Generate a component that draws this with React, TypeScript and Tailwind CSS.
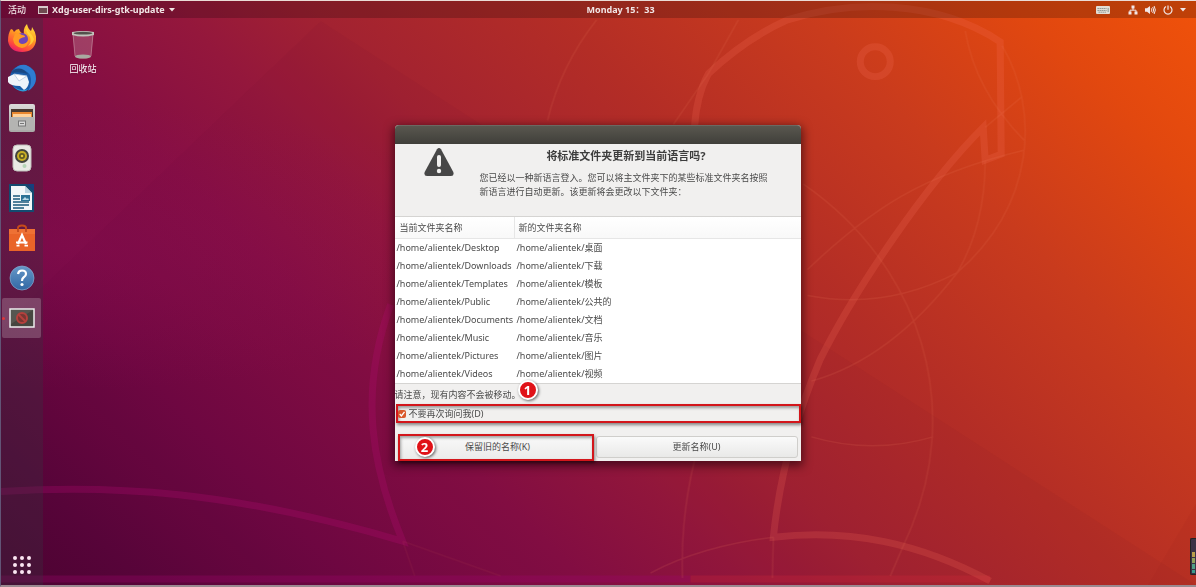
import React from "react";

const folders = [
  ["Desktop", "桌面"],
  ["Downloads", "下载"],
  ["Templates", "模板"],
  ["Public", "公共的"],
  ["Documents", "文档"],
  ["Music", "音乐"],
  ["Pictures", "图片"],
  ["Videos", "视频"],
];

function Wallpaper() {
  return (
    <svg
      className="absolute inset-0 h-full w-full"
      viewBox="0 0 1196 587"
      preserveAspectRatio="none"
      fill="none"
      aria-hidden="true"
    >
      <path d="M41 288 L320 20 L1196 587 L0 587 L0 330Z" fill="#4a0030" opacity="0.04" />
      <path d="M1196 505 L1148 587 L1196 587Z" fill="#5a0010" opacity="0.04" />
      <g stroke="#b30c74" strokeWidth="7" opacity="0.28">
        <path d="M0 493 C110 486 230 492 402 543 C372 470 357 395 390 305" />
      </g>
      <path d="M0 581 H690" stroke="#a0066c" strokeWidth="7" opacity="0.3" />
      <path d="M690 581 H990" stroke="#d8283c" strokeWidth="7" opacity="0.25" />
      <g stroke="#f8705c" strokeWidth="7" opacity="0.2">
        <path d="M694 128 Q696 95 708 73 Q745 38 787 19 C850 -1 935 -2 1000 41 L1001 154 L985 160 L983 127 C925 185 855 290 820 360 Q782 450 773 539 C850 530 920 545 990 583" />
        <circle cx="875" cy="61" r="15" />
      </g>
      <g stroke="#f08060" strokeWidth="1.5" opacity="0.15">
        <path d="M547 120 Q560 65 596 19" />
        <path d="M673 124 L708 73 L738 19" />
        <path d="M1002 45 C1040 110 1035 205 957 273 Q890 360 811 382" />
        <path d="M803 184 C920 265 967 410 905 543" />
        <path d="M807 296 Q885 311 957 273 Q985 225 985 160" />
        <path d="M807 270 C870 210 920 175 1024 150" />
        <path d="M965 30 Q975 90 1024 140" />
        <path d="M985 127 L1022 96" />
        <path d="M811 438 Q872 456 933 438" />
        <path d="M773 539 L772 580 M773 539 Q700 548 650 575 M694 462 Q680 520 682 580 M905 543 L890 578" />
        <path d="M402 543 L414 578 M402 543 L500 578" opacity="0.5" />
      </g>
    </svg>
  );
}

function Firefox() {
  return (
    <svg viewBox="0 0 28 28" className="size-7" aria-hidden="true">
      <defs>
        <linearGradient id="fx" x1="0.8" y1="0" x2="0.3" y2="1">
          <stop stopColor="#ffe23c" />
          <stop offset="0.45" stopColor="#ff9a22" />
          <stop offset="0.8" stopColor="#ff4c3c" />
          <stop offset="1" stopColor="#e91c6c" />
        </linearGradient>
      </defs>
      <path d="M3 5 Q5 5 6 8 Q8 5 11 5 Q12 9 16 10 Q15 4 19 0 Q20 5 23 7 Q24 5 24 3 Q29 10 28 17 Q26 28 14 28 Q2 28 0 17 Q0 9 3 5Z" fill="url(#fx)" />
      <circle cx="14" cy="15" r="6" fill="#7045b8" />
      <path d="M7 10 Q10 8 14 11 Q17 11 17 13 Q12 14 11 16 Q10 19 14 20 Q18 20 21 16 Q20 23 14 24 Q6 23 5 15Z" fill="#ff9a24" />
      <path d="M18 4 Q18 9 22 13 Q24 18 20 22 Q25 20 26 15 Q25 11 21 8Z" fill="#ffd83a" opacity="0.8" />
    </svg>
  );
}

function Thunderbird() {
  return (
    <svg viewBox="0 0 28 28" className="size-7" aria-hidden="true">
      <circle cx="15" cy="14" r="13" fill="#1b5ca8" />
      <path d="M6 6 Q10 0 18 1 Q28 5 28 15 Q27 23 20 27 Q25 19 22 11 Q17 4 6 6Z" fill="#2f7cd0" />
      <path d="M0 13 L6 10 L19 12 L21 18 Q20 24 16 26 L12 22 Q2 22 0 18Z" fill="#eef4fa" />
      <path d="M6 10 L11 17 L19 12Z" fill="#fff" stroke="#b5c9dd" strokeWidth="0.8" />
      <path d="M3 9 Q8 2 16 6 L20 10Q11 7 3 9Z" fill="#194883" />
      <path d="M5 22 Q12 28 20 25 L18 27 Q11 29 5 22Z" fill="#2c9bd8" />
    </svg>
  );
}

function Files() {
  return (
    <svg viewBox="0 0 28 28" className="size-7" aria-hidden="true">
      <defs>
        <linearGradient id="cab" x2="0" y2="1">
          <stop stopColor="#dadad8" />
          <stop offset="1" stopColor="#a9a9a7" />
        </linearGradient>
      </defs>
      <rect x="1" y="0" width="26" height="28" rx="2" fill="url(#cab)" />
      <rect x="3" y="5" width="22" height="8" fill="#493b32" />
      <path d="M4 8h20v5H4z" fill="#e8872f" />
      <path d="M5 10h18v3H5z" fill="#ffd29b" />
      <path d="M2 13h24v13H2z" fill="#b4b4b2" />
      <rect x="10.500" y="17" width="7" height="5" fill="#d8d8d8" stroke="#777" />
      <path d="M12 19.500h4" stroke="#777" />
    </svg>
  );
}

function Rhythmbox() {
  return (
    <svg viewBox="0 0 28 28" className="size-7" aria-hidden="true">
      <rect x="5" y="1" width="18" height="26" rx="4" fill="#e9e9e5" stroke="#bfc0bb" />
      <circle cx="14" cy="12" r="7" fill="#43453e" />
      <circle cx="14" cy="12" r="5" fill="#c6ae25" />
      <circle cx="14" cy="12" r="3" fill="#625b24" />
      <circle cx="14" cy="12" r="1.300" fill="#e5c938" />
      <circle cx="16.500" cy="22" r="2" fill="#b4d4b6" />
    </svg>
  );
}

function Writer() {
  return (
    <svg viewBox="0 0 28 28" className="size-7" aria-hidden="true">
      <path d="M1 0h18l7 7v21H1z" fill="#134b70" />
      <path d="M19 0h7v7z" fill="#15407e" />
      <path d="M3 2h14l7 7v17H3z" fill="#f2f7f9" />
      <path d="M17 2v7h7z" fill="#bad3df" />
      <path d="M5 12h7M5 15h7M5 18h16M5 21h16M5 24h11" stroke="#1a597b" strokeWidth="1.500" />
      <path d="M13 11h9v6h-9z" fill="#2b7295" />
      <path d="M14 16l3-3 2 2 1-1 1 2z" fill="#b7d9e7" />
    </svg>
  );
}

function Software() {
  return (
    <svg viewBox="0 0 28 28" className="size-7" aria-hidden="true">
      <path d="M10 6 V4 Q10 1.500 14 1.500 Q18 1.500 18 4 V6" fill="none" stroke="#c74b1a" strokeWidth="2" />
      <path d="M1 5h26v22H1z" fill="#e96428" />
      <path d="M1 5h26v5H1z" fill="#f27a3c" opacity="0.6" />
      <path d="M10 4v4M18 4v4" stroke="#b64218" strokeWidth="1.500" />
      <path d="M10 20 L14 11 L18 20" fill="none" stroke="#fff" strokeWidth="2.200" />
      <path d="M8 18.500h9M17.500 18.500h2M8.500 21.700h3M16.500 21.700h3.500" fill="none" stroke="#fff" strokeWidth="1.800" />
    </svg>
  );
}

function Help() {
  return (
    <svg viewBox="0 0 28 28" className="size-7" aria-hidden="true">
      <defs>
        <linearGradient id="hp" x2="0" y2="1">
          <stop stopColor="#6597c8" />
          <stop offset="1" stopColor="#3268a4" />
        </linearGradient>
      </defs>
      <circle cx="14" cy="14" r="12" fill="url(#hp)" stroke="#86abd0" strokeWidth="0.7" />
      <path d="M10 10 Q10.500 6.500 14 6.500 Q18 6.500 18 10 Q18 12 15.500 13.500 Q14 14.500 14 17" fill="none" stroke="#fff" strokeWidth="2.200" />
      <circle cx="14" cy="20.500" r="1.600" fill="#fff" />
    </svg>
  );
}

function BlockedScreen() {
  return (
    <svg viewBox="0 0 28 28" className="size-7" aria-hidden="true">
      <rect x="2" y="5" width="24" height="18" fill="#464640" stroke="#eee" strokeWidth="1.500" />
      <path d="M3 6h22L3 20z" fill="#66665f" opacity="0.5" />
      <circle cx="14" cy="14" r="5" fill="#783633" stroke="#b5403d" strokeWidth="2" />
      <path d="M10.500 10.500l7 7" stroke="#b5403d" strokeWidth="2" />
    </svg>
  );
}

const launchers = [
  { name: "Firefox", Icon: Firefox },
  { name: "Thunderbird", Icon: Thunderbird },
  { name: "Files", Icon: Files },
  { name: "Rhythmbox", Icon: Rhythmbox },
  { name: "LibreOffice Writer", Icon: Writer },
  { name: "Ubuntu Software", Icon: Software },
  { name: "Help", Icon: Help },
  { name: "Xdg-user-dirs-gtk-update", Icon: BlockedScreen, active: true },
];

function TopBar() {
  return (
    <header className="relative flex h-[17px] shrink-0 items-center bg-black/20 text-[9px] leading-4 font-bold text-[#f1e6e6]">
      <div className="flex w-[49%] items-center gap-3 pl-[7px]">
        <button className="font-medium">活动</button>
        <button className="flex items-center gap-1">
          <svg viewBox="0 0 10 8" className="h-2 w-[10px]" fill="none" aria-hidden="true">
            <rect x="0.5" y="0.5" width="9" height="7" fill="#6f4a50" stroke="#d8c8ca" />
            <path d="M1 1.500h8" stroke="#d8c8ca" />
          </svg>
          Xdg-user-dirs-gtk-update
          <svg viewBox="0 0 6 4" className="h-1 w-[6px]" aria-hidden="true">
            <path d="M0 0h6L3 3.500z" fill="currentColor" />
          </svg>
        </button>
      </div>
      <button>Monday 15：33</button>
      <div className="ml-auto flex items-center pr-[10px]">
        <button aria-label="Keyboard" className="mr-[18px]">
          <svg viewBox="0 0 14 8" className="h-2 w-[14px]" aria-hidden="true">
            <rect width="14" height="8" rx="1" fill="#e2ddd5" />
            <path d="M1.500 2.500h9M1.500 4.500h9M2.500 6.200h8" stroke="#8b9490" strokeDasharray="1.4 0.6" />
            <path d="M11.500 2h1.500v4h-1.500z" fill="#a8b0aa" />
          </svg>
        </button>
        <button aria-label="System menu" className="flex items-center gap-[7px]">
          <svg viewBox="0 0 10 10" className="size-[10px]" fill="currentColor" aria-hidden="true">
            <path d="M3.500 0.500h3v3h-3zM0.500 6.500h3v3h-3zM6.500 6.500h3v3h-3z" />
            <path d="M5 3v2.200M2 7V5.200h6V7" fill="none" stroke="currentColor" />
          </svg>
          <svg viewBox="0 0 11 10" className="h-[10px] w-[11px]" aria-hidden="true">
            <path d="M0 3.300h2L5 1v8L2 6.700H0z" fill="currentColor" />
            <path d="M6.300 3.300Q7.500 5 6.300 6.700M7.700 2Q9.700 5 7.700 8M9.100 1Q11.600 5 9.100 9" fill="none" stroke="currentColor" />
          </svg>
          <svg viewBox="0 0 10 10" className="size-[10px]" fill="none" stroke="currentColor" strokeWidth="1.200" aria-hidden="true">
            <path d="M5 0.500v4.200M3 1.600a4 4 0 1 0 4 0" />
          </svg>
          <svg viewBox="0 0 6 4" className="h-1 w-[6px]" aria-hidden="true">
            <path d="M0 0h6L3 3.500z" fill="currentColor" />
          </svg>
        </button>
      </div>
    </header>
  );
}

function Dock() {
  return (
    <nav className="flex w-[42px] shrink-0 flex-col bg-[#3a3040]/35 pb-[10px] pl-px">
      {launchers.map(({ name, Icon, active }) => (
        <button
          key={name}
          aria-label={name}
          className={
            active
              ? "relative flex h-10 w-[39px] items-center justify-center rounded-xs bg-white/20"
              : "flex h-10 w-[39px] items-center justify-center"
          }
        >
          {active && <span className="absolute left-0 size-[3px] rounded-full bg-[#e0353a]" />}
          <Icon />
        </button>
      ))}
      <button aria-label="Show applications" className="mt-auto flex w-[39px] justify-center">
        <svg viewBox="0 0 20 20" className="size-5" fill="#fbe6f2" aria-hidden="true">
          {[3, 10, 17].map((y) =>
            [3, 10, 17].map((x) => <circle key={`${x}-${y}`} cx={x} cy={y} r="2" />)
          )}
        </svg>
      </button>
    </nav>
  );
}

function TrashShortcut() {
  return (
    <button className="mt-3 ml-5 flex w-10 flex-col items-center gap-[1px] self-start text-[9px] leading-4 text-white text-shadow-sm">
      <svg viewBox="0 0 24 30" className="h-[30px] w-6" aria-hidden="true">
        <path d="M1.500 3L4 27Q12 31 20 27L22.500 3Z" fill="#d9b4bd" fillOpacity="0.28" />
        <path d="M2 4L4 26M22 4L20 26" stroke="#d8b3bb" strokeOpacity="0.45" fill="none" />
        <ellipse cx="12" cy="26.500" rx="8" ry="2" fill="#a9aaa1" />
        <path d="M1 2Q12 0 23 2V5Q12 8 1 5Z" fill="#c3c4bc" />
        <ellipse cx="12" cy="3.200" rx="9.500" ry="1.400" fill="#53514c" />
      </svg>
      <span>回收站</span>
    </button>
  );
}

function Marker({ n }: { n: number }) {
  return (
    <span className="flex size-5 items-center justify-center rounded-full border-2 border-white bg-[#e01218] font-['Open_Sans',sans-serif] text-[13px] leading-none font-bold text-white shadow-[1px_1px_3px_rgba(0,0,0,0.6)]">
      {n}
    </span>
  );
}

function UpdateDialog() {
  return (
    <section
      role="dialog"
      aria-labelledby="dialog-title"
      className="w-[406px] rounded-t-[4px] bg-[#f1f0ef] text-[9px] text-[#4a4a4a] shadow-[0_3px_10px_2px_rgba(30,0,10,0.6)]"
    >
      <div className="h-[19px] rounded-t-[4px] border-t border-[#6b6962] bg-linear-to-b from-[#59574f] to-[#403f3a]" />
      <div className="flex h-[72px] pt-1">
        <div className="flex w-[85px] shrink-0 justify-end pr-[26px]">
          <svg viewBox="0 0 30 28" className="h-7 w-[30px]" aria-hidden="true">
            <path d="M13 1.200Q15 -1 17 1.200L29.300 24Q30.500 28 27 28H3Q-0.500 28 0.700 24Z" fill="#474747" />
            <path d="M15 9V17" stroke="#f1f0ef" strokeWidth="4" strokeLinecap="round" />
            <circle cx="15" cy="23" r="2.200" fill="#f1f0ef" />
          </svg>
        </div>
        <div className="grow">
          <h1 id="dialog-title" className="pr-7 text-center text-[11px] leading-4 font-bold text-[#3d3d3d]">
            将标准文件夹更新到当前语言吗?
          </h1>
          <p className="pt-[7px] leading-[14px]">
            您已经以一种新语言登入。您可以将主文件夹下的某些标准文件夹名按照
            <br />
            新语言进行自动更新。该更新将会更改以下文件夹：
          </p>
        </div>
      </div>
      <table className="w-full border-separate border-spacing-0 border-y border-[#d5d4d2] bg-white text-left">
        <thead>
          <tr className="h-[22px] bg-linear-to-b from-white to-[#f8f8f8]">
            <th className="w-[120px] border-r border-b border-[#e6e6e6] p-0 pl-[5px] font-normal">当前文件夹名称</th>
            <th className="border-b border-[#e6e6e6] p-0 pl-1 font-normal">新的文件夹名称</th>
          </tr>
        </thead>
        <tbody>
          {folders.map(([from, to]) => (
            <tr key={from} className="h-[18px]">
              <td className="p-0 pl-[2px]">/home/alientek/{from}</td>
              <td className="p-0 pl-[2px]">/home/alientek/{to}</td>
            </tr>
          ))}
        </tbody>
      </table>
      <div className="relative h-5 leading-[22px]">
        请注意，现有内容不会被移动。
        <div className="absolute -top-1 left-[123px] z-10">
          <Marker n={1} />
        </div>
      </div>
      <label className="ml-px flex h-[19px] items-center gap-[3px] border-2 border-[#d3161b] shadow-[1px_2px_3px_rgba(0,0,0,0.45),inset_1px_2px_3px_rgba(0,0,0,0.35)]">
        <input type="checkbox" defaultChecked className="peer sr-only" />
        <span className="flex size-2 items-center justify-center rounded-xs bg-[#d9592c]">
          <svg viewBox="0 0 8 8" className="size-2" fill="none" stroke="#fff" strokeWidth="1.300" aria-hidden="true">
            <path d="M1.700 4L3.400 5.900L6.500 1.800" />
          </svg>
        </span>
        不要再次询问我(D)
      </label>
      <div className="grid grid-cols-[49fr_51fr] gap-[3px] pt-3 pr-[3px] pb-[2px] pl-1">
        <div className="relative">
          <button className="h-6 w-full rounded-xs bg-linear-to-b from-[#fafafa] to-[#ebebea] pl-1">保留旧的名称(K)</button>
          <div className="pointer-events-none absolute -inset-x-px -top-px -bottom-[2px] border-2 border-[#d3161b] shadow-[1px_2px_3px_rgba(0,0,0,0.45),inset_1px_2px_3px_rgba(0,0,0,0.35)]" />
          <div className="absolute top-[2px] left-4">
            <Marker n={2} />
          </div>
        </div>
        <button className="mt-px h-[22px] rounded-[3px] border border-[#cfcecb] bg-linear-to-b from-[#fafafa] to-[#e9e9e8]">
          更新名称(U)
        </button>
      </div>
    </section>
  );
}

export default function App() {
  return (
    <div className="relative flex h-screen flex-col overflow-hidden border-t border-b-2 border-l border-t-[#eadcd6] border-b-[#9a8a90] border-l-[#625476] bg-[linear-gradient(45deg,#4c0432_0%,#58053a_8%,#700842_20%,#850e43_33%,#94173c_42%,#a22231_50%,#b32d26_63%,#c93b1d_77%,#e2480f_90%,#f0520a_100%)] font-['Noto_Sans','Noto_Sans_CJK_SC',sans-serif]">
      <div className="absolute inset-0 bg-[radial-gradient(ellipse_at_5%_42%,rgba(150,16,90,0.3),transparent_30%)]" />
      <Wallpaper />
      <TopBar />
      <main className="relative flex min-h-0 grow">
        <Dock />
        <TrashShortcut />
      </main>
      <div className="absolute inset-0 flex items-center justify-center pr-[2px]">
        <UpdateDialog />
      </div>
      <div className="absolute right-0 bottom-[10px] flex h-[37px] w-[6px] flex-col justify-end gap-px rounded-l-xs border border-r-0 border-[#222] bg-[#3b3346] p-px">
        <span className="h-[5px] bg-[#b9a04c]" />
        <span className="h-[5px] bg-[#8fa25c]" />
        <span className="h-[5px] bg-[#4f9f86]" />
        <span className="h-[3px] bg-[#3c9c8c]" />
      </div>
    </div>
  );
}
